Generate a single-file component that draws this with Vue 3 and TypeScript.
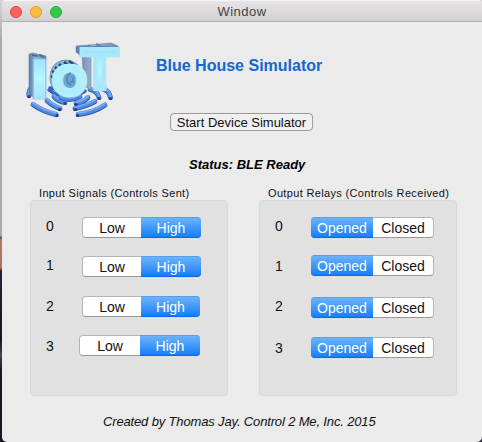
<script setup lang="ts">
import { ref } from 'vue'

interface Row {
  id: number
  labelTop: number
  top: number
  left: number
  first: number
  second: number
}
interface Group {
  title: string
  kind: string
  options: [string, string]
  active: number
  rows: Row[]
}

const groups = ref<Group[]>([
  {
    title: 'Input Signals (Controls Sent)',
    kind: 'inputs',
    options: ['Low', 'High'],
    active: 1,
    rows: [
      { id: 0, labelTop: 0, top: 0, left: 52, first: 58, second: 59 },
      { id: 1, labelTop: 0, top: 0, left: 52, first: 58, second: 59 },
      { id: 2, labelTop: 1, top: 0, left: 52, first: 58, second: 58 },
      { id: 3, labelTop: 1, top: -1, left: 49, first: 60, second: 59 },
    ],
  },
  {
    title: 'Output Relays (Controls Received)',
    kind: 'outputs',
    options: ['Opened', 'Closed'],
    active: 0,
    rows: [
      { id: 0, labelTop: 0, top: 0, left: 52, first: 61, second: 60 },
      { id: 1, labelTop: 1, top: -1, left: 52, first: 61, second: 60 },
      { id: 2, labelTop: 1, top: 1, left: 52, first: 61, second: 60 },
      { id: 3, labelTop: 3, top: 1, left: 52, first: 61, second: 60 },
    ],
  },
])

const frontWaves = [
  'M33 104Q43 111 56 114',
  'M47 100Q52 105 60 108',
  'M54 96Q58 101 65 102',
  'M88 97Q83 102 76 103',
  'M95 101Q86 106 75 108',
  'M105 104.500Q94 112 78 114',
  'M90 89Q97 90 99 97',
  'M101 88Q109 89 110.500 97',
  'M32 87Q28 90 29 95',
  'M61 97Q71 101 80 96',
]
</script>

<template>
  <div class="desktop">
    <main class="window">
      <header class="titlebar">
        <div class="lights"><i class="close"></i><i class="minimize"></i><i class="zoom"></i></div>
        <span class="window-title">Window</span>
      </header>

      <section class="hero">
        <svg class="logo" width="96" height="82" viewBox="24 38 96 82" aria-label="IoT">
          <defs>
            <linearGradient id="ice" x1="0" y1="0" x2="0" y2="1">
              <stop offset="0" stop-color="#92d4f8" />
              <stop offset=".5" stop-color="#b5f7fd" />
              <stop offset="1" stop-color="#98d5fa" />
            </linearGradient>
            <linearGradient id="side" x1="0" y1="0" x2="1" y2="0">
              <stop offset="0" stop-color="#557faf" />
              <stop offset=".4" stop-color="#a5b4cd" />
              <stop offset="1" stop-color="#6c86b0" />
            </linearGradient>
          </defs>
          <g fill="none" stroke-linecap="round">
            <path d="M49 90q5 4 9 5M85 91q-6 4-13 4M50 88q5 0 7 3" stroke="#3563b6" stroke-width="3.500" />
            <g v-for="wave in frontWaves" :key="wave">
              <path :d="wave" stroke="#315fae" stroke-width="4.800" transform="translate(0 .7)" />
              <path :d="wave" stroke="#4d87df" stroke-width="4.200" />
              <path :d="wave" stroke="#76aaf0" stroke-width="1.800" transform="translate(0 -1)" />
            </g>
            <path d="M29 96.500h.1M99 98.500h.1M110.500 98.500h.1M65 103.500h.1M59.500 109.500h.1M57 115.500h.1M76 104.500h.1M75.500 109.500h.1M77.500 115.500h.1" stroke="#213e87" stroke-width="3.200" />
          </g>
          <path d="M29 54l4-1 13 3v4H35v39l-6-6z" fill="url(#side)" stroke="#587caa" stroke-width=".6" />
          <path d="M32 55l6 1M39 55l5 2" stroke="#3b70b1" stroke-width="2" />
          <path d="M76 46l35-3 7 3v5l-36 6-6-5zM82 56l9 2v32l-7-4z" fill="url(#side)" stroke="#7187b0" stroke-width=".6" />
          <path d="M82 47h28M88 46l7 2M96 44l8 4" stroke="#5984b8" stroke-width="2" />
          <path d="M50 78Q50 65 60 61Q70 58 78 65L74 75L55 90Q50 86 50 78Z" fill="#8bb4d4" stroke="#587fa9" stroke-width=".7" />
          <path d="M51 76l5 3M52 71l6 4M55 67l5 5M59 64l5 5M64 62l5 4M69 61l5 4" stroke="#28496f" stroke-width="2.500" />
          <ellipse cx="70" cy="79" rx="10" ry="11" fill="#6fa4cd" />
          <g class="logo-letters">
            <text font-size="10" transform="translate(27.500 98.500) scale(8.700 5.800)" fill="url(#ice)" stroke="#83bdec" stroke-width=".12">I</text>
            <text font-size="10" transform="translate(52.500 94.500) scale(4.400 4.250)" fill="url(#ice)" stroke="#b1effb" stroke-width="1.050">O</text>
            <text font-size="10" transform="translate(81 89) scale(6.150 5.650)" fill="url(#ice)" stroke="#a9e7fb" stroke-width=".68">T</text>
          </g>
          <path d="M71 73q-4 1-4 6t4 6M73 77v5h-3" fill="none" stroke="#5283b9" stroke-width="1.500" />
        </svg>
        <h1>Blue House Simulator</h1>
        <button class="start">Start Device Simulator</button>
        <p class="status">Status: BLE Ready</p>
      </section>

      <section class="groups">
        <div v-for="group in groups" :key="group.kind" class="group" :class="group.kind">
          <h2>{{ group.title }}</h2>
          <div class="box">
            <div v-for="row in group.rows" :key="row.id" class="row">
              <span class="number" :style="{ marginTop: row.labelTop + 'px' }">{{ row.id }}</span>
              <div class="segments" :style="{ marginTop: row.top + 'px', marginLeft: row.left - 30 + 'px', gridTemplateColumns: `${row.first}px ${row.second}px` }">
                <button v-for="(option, i) in group.options" :key="option" :class="{ active: i === group.active }">{{ option }}</button>
              </div>
            </div>
          </div>
        </div>
      </section>
      <footer><span>Created by Thomas Jay. Control 2 Me, Inc. 2015</span></footer>
    </main>
  </div>
</template>

<style>
body { margin: 0; overflow: hidden; }
</style>
<style scoped>
* { box-sizing: border-box; }
.desktop { width: 482px; height: 442px; padding-left: 2px; background: linear-gradient(#d5d5d5 0, #aaa 40px, #aaa 236px, #5f4941 237px, #b27c5c 240px, #a87355 268px, #252331 271px, #171820 340px, #45434b 355px, #181922 370px); font-family: "Liberation Sans", Arial, sans-serif; color: #111; }
.window { width: 480px; height: 442px; display: flex; flex-direction: column; overflow: hidden; background: #ebebeb; border-radius: 4px 4px 5px 5px; }
.titlebar { height: 22px; flex: none; display: grid; grid-template-columns: 80px 1fr 80px; align-items: center; border-top: 1px solid #f5f3f5; border-bottom: 1px solid #afafaf; background: linear-gradient(#e7e3e6, #d1d1d1); }
.lights { display: flex; gap: 8px; padding-left: 8px; }
.lights i { width: 12px; height: 12px; border-radius: 50%; border: 1px solid #e2443f; background: #fc605c; }
.lights .minimize { background: #fdbc40; border-color: #dfa033; }
.lights .zoom { background: #34c84a; border-color: #27aa35; }
.window-title { text-align: center; font-size: 13px; line-height: 20px; color: #444; letter-spacing: .45px; padding-top: 1px; }
.hero { height: 163px; flex: none; display: grid; grid-template-columns: 154px 1fr; grid-template-rows: 91px 18px 54px; }
.logo { grid-area: 1 / 1 / 3 / 2; margin: 16px 0 0 22px; font-weight: bold; }
h1 { margin: 34px 0 0; font-size: 16px; line-height: 19px; color: #1268d3; white-space: nowrap; }
.start { grid-area: 2 / 2; width: 143px; height: 18px; margin-left: 14px; padding: 0; border: 1px solid #9b9b9b; border-radius: 4px; background: #f0f0f0; font: 13px/15px "Liberation Sans", Arial, sans-serif; white-space: nowrap; color: #111; }
.status { grid-area: 3 / 2; margin: 26px 0 0 33px; font-size: 13px; line-height: 15px; font-weight: bold; font-style: italic; color: #000; white-space: nowrap; }
.groups { display: grid; grid-template-columns: 198px 198px; gap: 31px; padding-left: 28px; }
h2 { height: 15px; margin: 0 0 0 9px; padding-top: 1px; font-size: 11px; font-weight: normal; line-height: 14px; white-space: nowrap; letter-spacing: .34px; }
.box { height: 196px; padding: 16px 0 0 15px; border: 1px solid #d9d9d9; border-radius: 4px; background: #e1e1e1; }
.row { height: 40px; display: flex; align-items: flex-start; }
.row:first-child { height: 39px; }
.number { width: 14px; flex: none; font-size: 14px; line-height: 18px; }
.segments { height: 21px; display: grid; border: 1px solid #b5b5b5; border-bottom-color: #999; border-radius: 4px; background: #fff; }
.segments button { margin: -1px 0; height: 21px; padding: 0; border: 0; background: transparent; font: 14px/20px "Liberation Sans", Arial, sans-serif; color: #111; text-align: center; }
.segments .active { color: #fff; background: linear-gradient(#6cb3fa, #167efb); border-top: 1px solid #559eed; border-bottom: 1px solid #0864f1; line-height: 18px; }
.inputs .active { border-radius: 0 4px 4px 0; margin-right: -1px; }
.outputs .active { border-radius: 4px 0 0 4px; margin-left: -1px; }
footer { margin-top: 18px; padding-left: 101px; font-size: 13px; line-height: 16px; font-style: italic; white-space: nowrap; letter-spacing: -.15px; }
</style>
